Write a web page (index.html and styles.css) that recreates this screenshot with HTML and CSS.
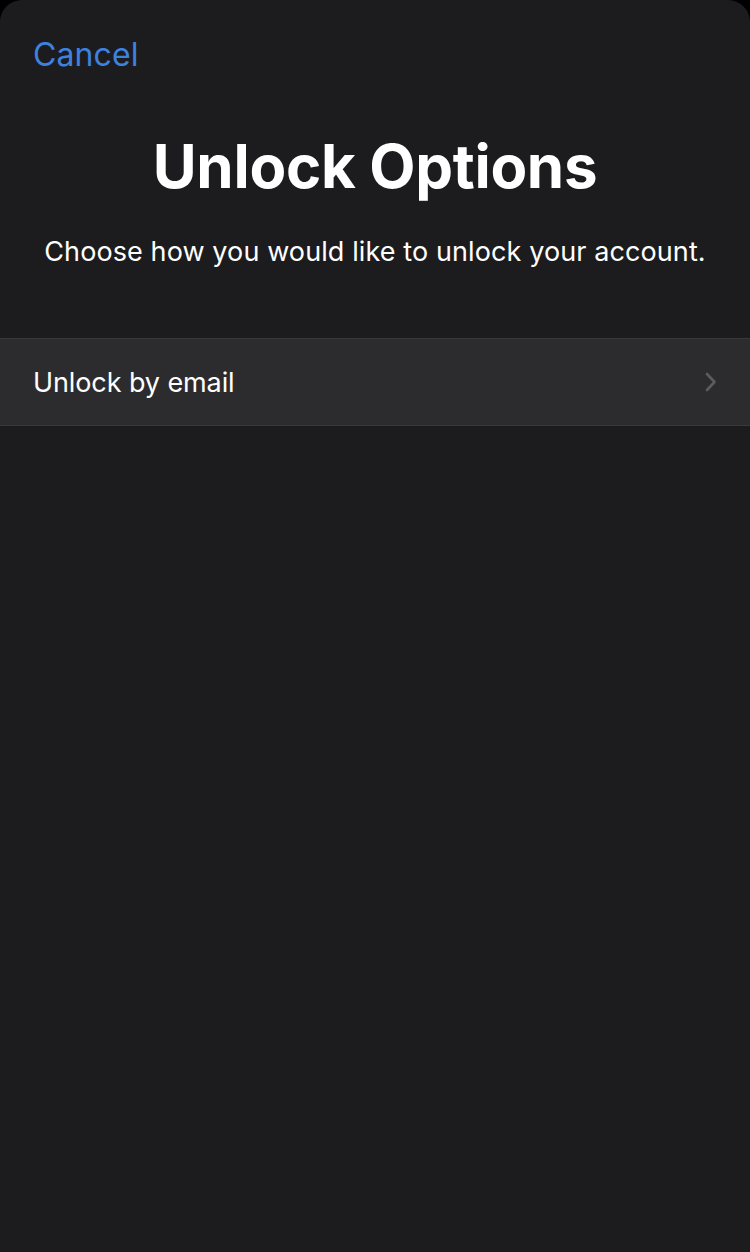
FILE: index.html
```html
<!DOCTYPE html>
<html lang="en">
<head>
<meta charset="utf-8">
<title>Unlock Options</title>
<link rel="stylesheet" href="styles.css">
</head>
<body>
<div class="sheet">
  <header class="nav">
    <a class="cancel" href="#">Cancel</a>
  </header>
  <section class="intro">
    <h1 class="title">Unlock Options</h1>
    <p class="subtitle">Choose how you would like to unlock your account.</p>
  </section>
  <ul class="options">
    <li class="option">
      <span class="option-label">Unlock by email</span>
      <svg class="chevron" width="14" height="22" viewBox="0 0 14 22" aria-hidden="true">
        <path d="M3 3 L10.5 11 L3 19" fill="none" stroke="#5b5b60" stroke-width="2.6" stroke-linecap="round" stroke-linejoin="round"/>
      </svg>
    </li>
  </ul>
</div>
</body>
</html>
```

FILE: styles.css
```css
html, body {
  margin: 0;
  padding: 0;
  background: #000;
  height: 100%;
}
body {
  font-family: Inter, "Noto Sans", "Liberation Sans", sans-serif;
  color: #fff;
}
.sheet {
  background: #1c1c1e;
  min-height: 1252px;
  border-radius: 22px 22px 0 0;
  overflow: hidden;
}
.nav {
  padding: 36px 33px 0;
  height: 50px;
}
.cancel {
  color: #3d82e0;
  text-decoration: none;
  font-size: 32px;
  line-height: 38px;
  letter-spacing: 0.1px;
}
.intro {
  text-align: center;
  padding: 42px 20px 0;
}
.title {
  margin: 0;
  font-size: 60px;
  font-weight: 700;
  line-height: 76px;
  letter-spacing: -0.3px;
}
.subtitle {
  margin: 30px 0 0;
  font-size: 27px;
  line-height: 36px;
  letter-spacing: 0.1px;
}
.options {
  list-style: none;
  margin: 0;
  padding: 0;
  margin-top: 68px;
  border-top: 1px solid #3a3a3d;
  border-bottom: 1px solid #3a3a3d;
}
.option {
  display: flex;
  align-items: center;
  justify-content: space-between;
  height: 86px;
  padding: 0 32px 0 33px;
  background: #2c2c2f;
}
.option-label {
  font-size: 27px;
  letter-spacing: -0.1px;
}
.chevron {
  display: block;
}
```
